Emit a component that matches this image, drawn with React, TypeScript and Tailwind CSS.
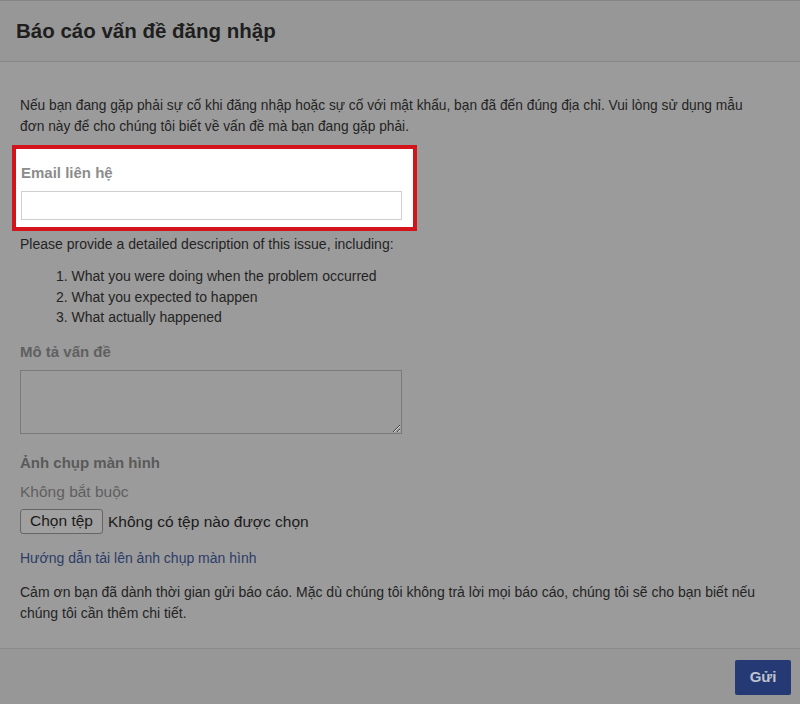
export default function App() {
  return (
    <div
      className="w-[800px] h-[704px] flex flex-col bg-[#9b9b9b] text-[#242424] overflow-hidden"
      style={{ fontFamily: '"Liberation Sans", Arial, sans-serif' }}
    >
      {/* header */}
      <div className="h-[62px] shrink-0 flex items-center px-4 bg-[#979797] border-t border-t-[#858585] border-b border-b-[#878787]">
        <h1 className="text-[20.5px] font-bold text-[#1e1e1e]">Báo cáo vấn đề đăng nhập</h1>
      </div>

      {/* body */}
      <div className="flex-1 px-5 pt-[33px] text-[14px] leading-[21px]">
        <p className="text-[13.75px] whitespace-nowrap">
          Nếu bạn đang gặp phải sự cố khi đăng nhập hoặc sự cố với mật khẩu, bạn đã đến đúng địa chỉ. Vui lòng sử dụng mẫu
          <br />
          đơn này để cho chúng tôi biết về vấn đề mà bạn đang gặp phải.
        </p>

        <div className="-mx-2 mt-[8px] w-[405px] h-[86px] border-[4px] border-[#d3141b] bg-white px-[5px] pt-[14px]">
          <div className="font-bold text-[15px] leading-[20px] text-[#8c8c8c]">Email liên hệ</div>
          <input
            type="text"
            className="mt-[8px] block w-[381px] h-[29px] border border-[#cfcfcf] bg-white outline-none"
          />
        </div>

        <p className="mt-[3px]">Please provide a detailed description of this issue, including:</p>
        <ol className="mt-[11px] ml-[36px] leading-[20.5px]">
          <li>1. What you were doing when the problem occurred</li>
          <li>2. What you expected to happen</li>
          <li>3. What actually happened</li>
        </ol>

        <div className="mt-[13px] font-bold text-[15px] text-[#606060]">Mô tả vấn đề</div>
        <textarea className="mt-[8px] block w-[382px] h-[64px] border border-[#7a7a7a] bg-[#9b9b9b] outline-none resize" />

        <div className="mt-[18px] font-bold text-[15px] text-[#5a5a5a]">Ảnh chụp màn hình</div>
        <div className="mt-[8px] text-[15.5px] text-[#5f5f5f]">Không bắt buộc</div>
        <div className="mt-[7px] flex items-center text-[15.5px] text-[#1a1a1a]">
          <button className="h-[25px] w-[83px] rounded-[3px] border border-[#666] bg-[#a0a0a0] text-[15.5px] leading-none">
            Chọn tệp
          </button>
          <span className="ml-[5px]">Không có tệp nào được chọn</span>
        </div>
        <div className="mt-[14px] text-[#2d3c68]">Hướng dẫn tải lên ảnh chụp màn hình</div>
        <p className="mt-[13px] whitespace-nowrap">
          Cảm ơn bạn đã dành thời gian gửi báo cáo. Mặc dù chúng tôi không trả lời mọi báo cáo, chúng tôi sẽ cho bạn biết nếu
          <br />
          chúng tôi cần thêm chi tiết.
        </p>
      </div>

      {/* footer */}
      <div className="h-[56px] shrink-0 flex items-start justify-end pt-[11px] pr-[9px] bg-[#979797] border-t border-[#8a8a8a]">
        <button className="w-[56px] h-[35px] rounded-[2px] bg-[#253a74] text-[#bfc3cf] font-bold text-[15px]">
          Gửi
        </button>
      </div>
    </div>
  )
}
